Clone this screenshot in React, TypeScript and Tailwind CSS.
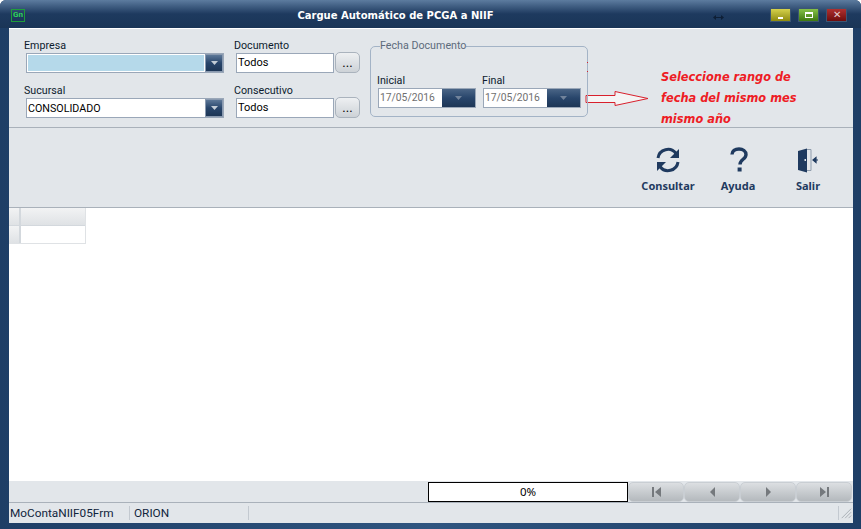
// Cargue automatico PCGA a NIIF window
import React from 'react';

const Arrow = () => (
  <span className="w-[18px] h-full flex items-center justify-center border border-[#8a9ab0] bg-gradient-to-b from-[#5d7898] via-[#28456b] to-[#1d3656]">
    <svg width="7" height="4" viewBox="0 0 7 4">
      <path d="M0 0h7L3.500 4z" fill="#c3ccd6" />
    </svg>
  </span>
);

const Combo = ({ value, fill }: { value?: string; fill?: boolean }) => (
  <div className="w-[198px] h-[20px] flex border border-[#9aa7b8] bg-white">
    <div className={`flex-1 pl-[1px] text-[10.7px] leading-[20px] text-black ${fill ? 'bg-[#b5d9ea] border border-white' : ''}`}>
      {value}
    </div>
    <Arrow />
  </div>
);

const TextPick = ({ value }: { value: string }) => (
  <div className="flex items-start gap-[1px] h-[20px]">
    <div className="w-[98px] h-[20px] border border-[#9aa7b8] bg-white pl-[1px] text-[11px] leading-[17px] text-black">
      {value}
    </div>
    <button className="w-[25px] h-[21px] -mt-[1px] rounded-[5px] border border-[#aab3bd] bg-gradient-to-b from-[#eef0f2] to-[#cdd2d7] text-[13px] leading-[20px] text-black">
      ...
    </button>
  </div>
);

const DatePick = ({ label }: { label: string }) => (
  <div className="flex flex-col">
    <span className="text-[10.7px] leading-[14px] -ml-[1px] text-[#0d1b2e]">{label}</span>
    <div className="w-[98px] h-[20px] flex border border-[#9aa7b8] bg-white">
      <div className="flex-1 pl-[1px] text-[10.300px] leading-[18px] text-[#6f6f6f]">17/05/2016</div>
      <span className="w-[33px] flex items-center justify-center bg-gradient-to-b from-[#4a6586] via-[#28456b] to-[#1d3656]">
        <svg width="7" height="4" viewBox="0 0 7 4">
          <path d="M0 0h7L3.500 4z" fill="#71839b" />
        </svg>
      </span>
    </div>
  </div>
);

const Field = ({ label, children }: { label: string; children: React.ReactNode }) => (
  <div className="flex flex-col">
    <span className="text-[10.7px] leading-[14px] -ml-[2px] text-[#0d1b2e]">{label}</span>
    {children}
  </div>
);

const Tool = ({ label, children }: { label: string; children: React.ReactNode }) => (
  <div className="w-[60px] flex flex-col items-center text-[#1f3a5f]">
    <div className="h-[30px] flex items-center justify-center">{children}</div>
    <span className="mt-[4px] font-['Noto_Sans',sans-serif] text-[11px] leading-[14px] font-bold">{label}</span>
  </div>
);

const NavButton = ({ children }: { children: React.ReactNode }) => (
  <button className="w-[56px] h-[20px] flex items-center justify-center rounded-[5px] border border-[#c9ced3] bg-gradient-to-b from-[#dcdfe2] to-[#b4b9bd]">
    <svg width="9" height="10" viewBox="0 0 9 10" fill="#75797d">
      {children}
    </svg>
  </button>
);

export default function App() {
  return (
    <div className="w-[861px] h-[529px] flex flex-col overflow-hidden rounded-t-[6px] bg-gradient-to-r from-[#1e3e66] via-[#2f5580] to-[#1e3e66] font-['Roboto',sans-serif]">
      {/* title bar */}
      <div className="relative h-[28px] shrink-0 flex items-center pl-[11px] pr-[14px] pt-[2px] bg-gradient-to-b from-[#5d7c9f] via-[#1e3a5f] to-[#1a3557]">
        <div className="w-[14px] h-[13px] border border-[#1f9d3a] flex items-center justify-center text-[8px] leading-none font-bold text-[#2fd65a]">
          Gn
        </div>
        <div className="flex-1 pr-[4px] text-center font-['DejaVu_Sans',sans-serif] text-[10px] font-bold text-white">
          Cargue Automático de PCGA a NIIF
        </div>
        {/* resize cursor caught by the screenshot */}
        <svg width="11" height="5" viewBox="0 0 11 5" className="absolute left-[713px] top-[15px]" fill="#0e1f36">
          <path d="M0 2.500L3 0v2h5V0l3 2.500L8 5V3H3v2z" />
        </svg>
        <div className="flex gap-[7px]">
          <div className="w-[21px] h-[14px] flex items-end justify-center pb-[2px] border border-[#3c5572] bg-gradient-to-b from-[#d6d24a] to-[#8f8b0a]">
            <span className="w-[5px] h-[2px] bg-white" />
          </div>
          <div className="w-[21px] h-[14px] flex items-center justify-center border border-[#3c5572] bg-gradient-to-b from-[#86c148] to-[#3f7a0e]">
            <span className="w-[8px] h-[6px] border border-white border-t-2" />
          </div>
          <div className="w-[21px] h-[14px] flex items-center justify-center border border-[#3c5572] bg-gradient-to-b from-[#b03030] to-[#6e0c0c] text-[10px] leading-none text-[#e8d0d0]">
            ✕
          </div>
        </div>
      </div>

      {/* window body */}
      <div className="flex-1 ml-[9px] mr-[8px] mb-[6px] flex flex-col bg-[#e2e6ea] border-t border-white">
        {/* filters */}
        <div className="h-[99px] shrink-0 flex pl-[17px] pt-[10px] border-b border-[#a9b1ba]">
          <div className="flex flex-col gap-[11px] w-[210px]">
            <Field label="Empresa">
              <Combo fill />
            </Field>
            <Field label="Sucursal">
              <Combo value="CONSOLIDADO" />
            </Field>
          </div>
          <div className="flex flex-col gap-[11px] w-[134px]">
            <Field label="Documento">
              <TextPick value="Todos" />
            </Field>
            <Field label="Consecutivo">
              <TextPick value="Todos" />
            </Field>
          </div>
          <fieldset className="relative w-[218px] h-[77px] mt-[1px] border border-[#a3b3c6] rounded-[5px] pl-[7px]">
            <legend className="ml-[2px] text-[10.7px] leading-[12px] text-[#5d6b7c]">Fecha Documento</legend>
            <div className="flex gap-[7px] mt-[22px]">
              <DatePick label="Inicial" />
              <DatePick label="Final" />
            </div>
            <span className="absolute -right-[1px] top-[10px] w-px h-[10px] border-y border-[#d8202c]" />
          </fieldset>
          <svg width="64" height="15" viewBox="0 0 64 15" className="mt-[52px] ml-[-3px] shrink-0">
            <path d="M1 4.500h29V.5L63 7.500 30 14.500v-3H1z" fill="#f4f4f4" stroke="#d8202c" strokeWidth="1" />
          </svg>
          <div className="ml-[12px] mt-[28px] flex flex-col font-['DejaVu_Sans',sans-serif] text-[11.400px] leading-[21px] font-bold italic text-[#ee1c25] whitespace-nowrap">
            <span>Seleccione rango de</span>
            <span>fecha del mismo mes</span>
            <span>mismo año</span>
          </div>
        </div>

        {/* toolbar */}
        <div className="h-[80px] shrink-0 flex justify-end items-start gap-[10px] pr-[15px] pt-[17px] border-b border-[#a9b1ba]">
          <Tool label="Consultar">
            <svg width="26" height="26" viewBox="0 0 26 26" fill="none" stroke="#1f3a5f" strokeWidth="3">
              <path d="M3 11A10 10 0 0 1 21 6.500" />
              <path d="M23 15A10 10 0 0 1 5 19.500" />
              <path d="M24 2v9h-9z" fill="#1f3a5f" stroke="none" />
              <path d="M2 24v-9h9z" fill="#1f3a5f" stroke="none" />
            </svg>
          </Tool>
          <Tool label="Ayuda">
            <svg width="18" height="26" viewBox="0 0 18 26" fill="none" className="ml-[2px]">
              <path d="M2 7.500C2 4 5 2 9 2s7 2.200 7 5.500c0 5-6 4.500-6 10" stroke="#1f3a5f" strokeWidth="3.400" />
              <rect x="7.600" y="20.500" width="4" height="4" fill="#1f3a5f" />
            </svg>
          </Tool>
          <Tool label="Salir">
            <svg width="22" height="25" viewBox="0 0 22 25" fill="none">
              <path d="M1 3l9-2.500v24L1 22z" fill="#1f3a5f" />
              <path d="M10 1.500h4v21h-4" stroke="#8f9cac" strokeWidth="1" />
              <rect x="7.500" y="11" width="1.500" height="2" fill="#e2e6ea" />
              <path d="M16 12h5M16 12l3-2.500v5z" stroke="#1f3a5f" strokeWidth="1.200" fill="#1f3a5f" />
            </svg>
          </Tool>
        </div>

        {/* grid */}
        <div className="flex-1 bg-white">
          <div className="w-[76px] box-content grid grid-cols-[12px_64px] grid-rows-[18px_17px] border-r border-b border-[#dfe2e5]">
            <div className="border-r-2 border-b border-[#d3d8dd] bg-gradient-to-b from-[#f2f3f4] to-[#dfe2e5]" />
            <div className="border-b border-[#d3d8dd] bg-gradient-to-b from-[#f2f3f4] to-[#dfe2e5]" />
            <div className="border-r-2 border-[#d3d8dd] bg-gradient-to-b from-[#f2f3f4] to-[#dfe2e5]" />
            <div className="bg-white" />
          </div>
        </div>

        {/* progress and navigation */}
        <div className="h-[22px] shrink-0 flex items-center justify-end pr-[1px] border-b border-[#a9b1ba]">
          <div className="w-[200px] h-[20px] border border-black bg-white text-center font-['Noto_Sans',sans-serif] text-[11.500px] leading-[18px] text-black">
            0%
          </div>
          <NavButton>
            <path d="M0 0h2v10H0zM9 0v10L3 5z" />
          </NavButton>
          <NavButton>
            <path d="M7 0v10L2 5z" />
          </NavButton>
          <NavButton>
            <path d="M2 0v10l5-5z" />
          </NavButton>
          <NavButton>
            <path d="M0 0v10l6-5zM7 0h2v10H7z" />
          </NavButton>
        </div>

        {/* status bar */}
        <div className="h-[20px] shrink-0 flex items-center text-[11.800px] leading-[14px] text-[#10243c]">
          <div className="w-[120px] pl-[1px]">MoContaNIIF05Frm</div>
          <div className="w-[119px] pl-[4px] border-l border-[#c3c9d0]">ORION</div>
          <div className="flex-1 h-[14px] border-l border-[#c3c9d0]" />
          <svg width="14" height="14" viewBox="0 0 14 14" stroke="#a3a9b0" className="mr-[1px] border-l border-[#c3c9d0] pl-[1px]">
            <path d="M2 13L13 2M6 13l7-7M10 13l3-3" />
          </svg>
        </div>
      </div>
    </div>
  );
}
